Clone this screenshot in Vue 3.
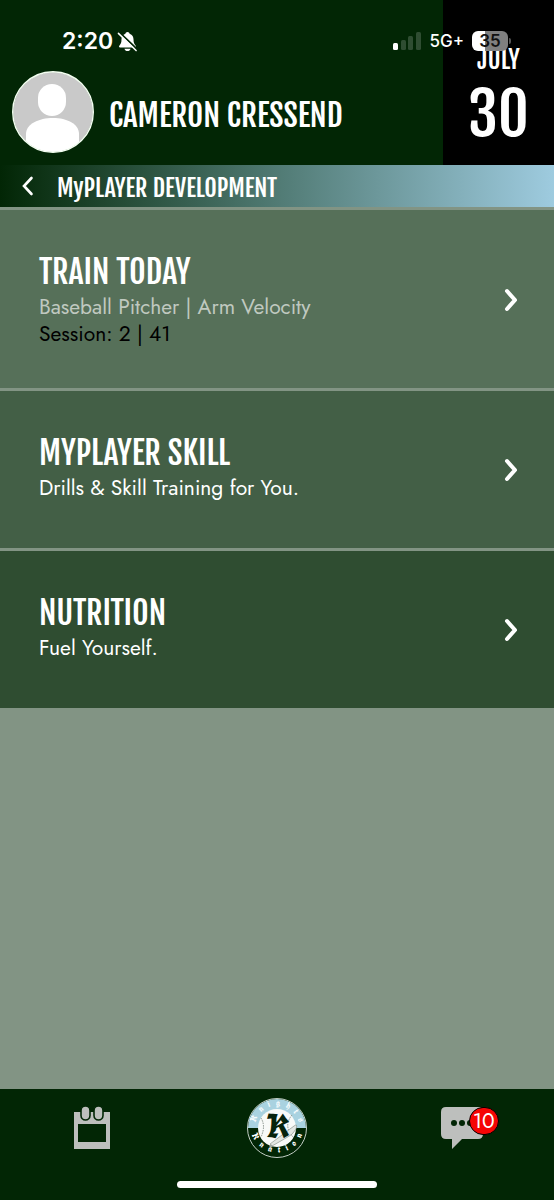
<template>
  <div class="app">
    <div class="status-bar">
      <div class="status-left">
        <span class="clock">2:20</span>
        <svg class="bell-icon" viewBox="0 0 22 22" aria-hidden="true">
          <path d="M11 1C9.8 1 9 1.8 8.8 2.8C5.8 3.7 4.7 6.2 4.7 9C4.7 12.8 3.8 13.8 2.4 15.4C1.8 16.2 2.2 17.2 3.2 17.2H18.8C19.8 17.2 20.2 16.2 19.6 15.4C18.2 13.8 17.3 12.8 17.3 9C17.3 6.2 16.2 3.7 13.2 2.8C13 1.8 12.2 1 11 1Z" fill="#fff"/>
          <path d="M7.8 18.5H14.2C13.8 20 12.6 21 11 21S8.2 20 7.8 18.5Z" fill="#fff"/>
          <path d="M2.6 1.6L21 19" stroke="#022605" stroke-width="2"/>
          <path d="M1.5 2.5L20 20.5" stroke="#fff" stroke-width="1.6" stroke-linecap="round"/>
        </svg>
      </div>
      <div class="status-right">
        <svg class="signal-icon" viewBox="0 0 28 18" aria-hidden="true">
          <rect x="0" y="11" width="5" height="7" rx="1.5" fill="#fff"/>
          <rect x="8" y="8" width="5" height="10" rx="1.5" fill="#2f4d32"/>
          <rect x="15" y="4" width="5" height="14" rx="1.5" fill="#2f4d32"/>
          <rect x="23" y="0" width="5" height="18" rx="1.5" fill="#2f4d32"/>
        </svg>
        <span class="network">5G+</span>
        <span class="battery">35</span>
      </div>
    </div>

    <header class="header">
      <div class="profile">
        <svg class="avatar" viewBox="0 0 82 82" aria-hidden="true">
          <defs>
            <clipPath id="avatar-clip"><circle cx="41" cy="41" r="40"/></clipPath>
          </defs>
          <circle cx="41" cy="41" r="40" fill="#c9c9c9"/>
          <g clip-path="url(#avatar-clip)" fill="#fff">
            <rect x="26" y="13" width="28" height="32" rx="14"/>
            <path d="M14 82V63C14 53 27 47 41 47S67 53 67 63V82Z"/>
          </g>
          <circle cx="41" cy="41" r="40.3" fill="none" stroke="#f4fff2" stroke-width="1.4"/>
        </svg>
        <h1 class="name">CAMERON CRESSEND</h1>
      </div>
      <div class="date">
        <span class="month">JULY</span>
        <span class="day">30</span>
      </div>
    </header>

    <nav class="title-bar">
      <button class="back" type="button" aria-label="Back">
        <svg width="12" height="20" viewBox="0 0 12 20" fill="none">
          <path d="M9.5 2L2 10L9.5 18" stroke="#fff" stroke-width="2.6" stroke-linecap="round"/>
        </svg>
      </button>
      <h2 class="page-title">MyPLAYER DEVELOPMENT</h2>
    </nav>

    <main class="content">
      <button v-for="card in cards" :key="card.id" class="card" :class="card.id" type="button">
        <span class="card-body">
          <span class="card-title">{{ card.title }}</span>
          <span class="card-text">{{ card.text }}</span>
          <span v-if="card.session" class="card-text session">{{ card.session }}</span>
        </span>
        <svg class="chevron" width="16" height="26" viewBox="0 0 16 26" fill="none" aria-hidden="true">
          <path d="M4 4L12 13L4 22" stroke="#fff" stroke-width="4" stroke-linecap="round" stroke-linejoin="round"/>
        </svg>
      </button>
    </main>

    <footer class="footer">
      <div class="tabs">
        <button class="tab" type="button" aria-label="Calendar">
          <svg width="36" height="44" viewBox="0 0 36 44">
            <path d="M0 6H36V43H0Z" fill="#bdbfbd"/>
            <path d="M4 18H32V36H4Z" fill="#022605"/>
            <rect x="7" y="0" width="9" height="14" rx="4.5" fill="#bdbfbd" stroke="#022605" stroke-width="1.6"/>
            <rect x="20" y="0" width="9" height="14" rx="4.5" fill="#bdbfbd" stroke="#022605" stroke-width="1.6"/>
          </svg>
        </button>
        <button class="tab" type="button" aria-label="Knights Knation">
          <svg width="62" height="62" viewBox="0 0 62 62">
            <defs>
              <path id="arc-top" d="M9 31A22 22 0 0 1 53 31"/>
              <path id="arc-bottom" d="M4 29A27 27 0 0 0 58 29"/>
            </defs>
            <circle cx="31" cy="31" r="29.5" fill="#022605"/>
            <path d="M2 31A29 29 0 0 1 60 31Z" fill="#a9d2e0"/>
            <circle cx="31" cy="31" r="29.5" fill="none" stroke="#c3cec6" stroke-width="1"/>
            <circle cx="31" cy="31" r="19" fill="#f8faf8"/>
            <path d="M15 21Q20 29 15 40M46 18Q37 29 47 40" fill="none" stroke="#87918a" stroke-width="1" stroke-dasharray="1.5 1"/>
            <path d="M24 47L48 29Q52 26 50 32Q47 38 40 41L26 49Z" fill="#e2e6e2" stroke="#7d867f" stroke-width="0.6"/>
            <circle cx="25" cy="49" r="1.6" fill="#9ea69f"/>
            <text class="arc-text light" text-anchor="middle"><textPath href="#arc-top" startOffset="50%">K&#160;&#160; n&#160;&#160; i&#160;&#160; g&#160;&#160; h&#160;&#160; t&#160;&#160; s</textPath></text>
            <text class="arc-text" text-anchor="middle"><textPath href="#arc-bottom" startOffset="50%">K&#160;&#160;&#160; n&#160;&#160;&#160; a&#160;&#160;&#160; t&#160;&#160;&#160; i&#160;&#160;&#160; o&#160;&#160;&#160; n</textPath></text>
            <text class="monogram" x="32" y="42" text-anchor="middle">K</text>
          </svg>
        </button>
        <button class="tab" type="button" aria-label="Messages">
          <span class="message">
            <svg width="42" height="43" viewBox="0 0 42 43">
              <path d="M5 0H37Q42 0 42 5V27Q42 32 37 32H21L11 42V32H5Q0 32 0 27V5Q0 0 5 0Z" fill="#bdbfbd"/>
              <circle cx="13" cy="16" r="3" fill="#022605"/>
              <circle cx="21" cy="16" r="3" fill="#022605"/>
              <circle cx="29" cy="16" r="3" fill="#022605"/>
            </svg>
            <span class="badge">10</span>
          </span>
        </button>
      </div>
      <div class="home-indicator"></div>
    </footer>
  </div>
</template>

<script setup>
const cards = [
  {
    id: 'train',
    title: 'TRAIN TODAY',
    text: 'Baseball Pitcher | Arm Velocity',
    session: 'Session: 2 | 41'
  },
  { id: 'skill', title: 'MYPLAYER SKILL', text: 'Drills & Skill Training for You.' },
  { id: 'nutrition', title: 'NUTRITION', text: 'Fuel Yourself.' }
]
</script>

<style>
body {
  margin: 0;
  background: #829484;
}
</style>

<style scoped>
.app {
  position: relative;
  display: flex;
  flex-direction: column;
  min-height: 100vh;
  background: #829484;
  color: #fff;
  font-family: Futura, Jost, "Josefin Sans", Lato, "Liberation Sans", sans-serif;
}

button {
  margin: 0;
  padding: 0;
  border: 0;
  background: none;
  color: inherit;
  font: inherit;
  cursor: pointer;
}

h1,
h2 {
  margin: 0;
}

svg {
  display: block;
  flex-shrink: 0;
}

.name,
.date,
.page-title,
.card-title {
  font-family: "Fjalla One", "Roboto Condensed", "Liberation Sans Narrow", "Open Sans Condensed", sans-serif;
  font-weight: 400;
}

/* system status, drawn over the header */
.status-bar {
  position: absolute;
  top: 28px;
  left: 0;
  right: 0;
  z-index: 1;
  display: flex;
  align-items: center;
  justify-content: space-between;
  height: 26px;
  padding: 0 46px 0 62px;
  font-family: Inter, sans-serif;
}

.status-left,
.status-right {
  display: flex;
  align-items: center;
}

.status-left {
  gap: 4px;
}

.status-right {
  gap: 8px;
}

.clock {
  font-size: 23px;
  font-weight: 600;
}

.bell-icon {
  width: 21px;
  height: 21px;
}

.signal-icon {
  width: 28px;
  height: 18px;
}

.network {
  font-size: 17px;
  font-weight: 500;
}

.battery {
  position: relative;
  width: 36px;
  height: 20px;
  border-radius: 6px;
  background: linear-gradient(90deg, #fff 35%, #808080 35%);
  color: #111;
  font-size: 17px;
  font-weight: 600;
  line-height: 20px;
  text-align: center;
}

.battery::after {
  content: "";
  position: absolute;
  top: 7px;
  right: -3px;
  width: 2px;
  height: 6px;
  border-radius: 0 2px 2px 0;
  background: #555;
}

.header {
  display: flex;
  background: #022605;
}

.profile {
  display: flex;
  flex: 1;
  align-items: center;
  gap: 15px;
  padding: 71px 0 12px 12px;
}

.avatar {
  width: 82px;
  height: 82px;
}

.name {
  padding-top: 8px;
  font-size: 31px;
  line-height: 36px;
  white-space: nowrap;
}

.date {
  display: flex;
  flex-direction: column;
  align-items: center;
  width: 20%;
  padding-top: 44px;
  box-sizing: border-box;
  background: #000;
}

.month {
  font-size: 25px;
  line-height: 32px;
}

.day {
  font-size: 60px;
  line-height: 76px;
}

.title-bar {
  display: flex;
  align-items: center;
  gap: 23px;
  height: 42px;
  padding-left: 22px;
  background: linear-gradient(90deg, #022605 0%, #527c76 51%, #9ecbdf 100%);
}

.page-title {
  padding-top: 4px;
  font-size: 24px;
  line-height: 32px;
}

.content {
  display: flex;
  flex: 1;
  flex-direction: column;
  gap: 3px;
  padding-top: 3px;
}

.card {
  display: flex;
  align-items: center;
  justify-content: space-between;
  padding: 41px 35px 40px 39px;
  text-align: left;
}

.train {
  background: #567059;
}

.skill {
  background: #435f46;
}

.nutrition {
  background: #2f4d31;
}

.card-body {
  display: flex;
  flex-direction: column;
}

.card-title {
  font-size: 32px;
  line-height: 43px;
}

.card-text {
  font-size: 21px;
  line-height: 27px;
  padding-bottom: 6px;
}

.train .card-text {
  padding-bottom: 0;
  color: #c0c9c0;
}

.train .session {
  color: #000;
}

.footer {
  background: #022605;
}

.tabs {
  display: grid;
  grid-template-columns: repeat(3, 1fr);
  align-items: center;
  padding: 8px 0;
}

.tab {
  display: flex;
  justify-content: center;
}

.arc-text,
.monogram {
  font-family: "Old English Text MT", UnifrakturCook, UnifrakturMaguntia, "Pirata One", "Grenze Gotisch", "Liberation Serif", serif;
  font-weight: 700;
}

.arc-text {
  fill: #fff;
  font-size: 9px;
}

.arc-text.light {
  fill: #f5fbfd;
}

.monogram {
  fill: #06230d;
  font-size: 33px;
}

.message {
  position: relative;
}

.badge {
  position: absolute;
  top: 0;
  left: 28px;
  width: 28px;
  height: 26px;
  border: 1px solid #000;
  border-radius: 14px;
  background: #f50505;
  font-size: 21px;
  line-height: 26px;
  text-align: center;
}

.home-indicator {
  width: 36%;
  height: 7px;
  margin: 14px auto 12px;
  border-radius: 4px;
  background: #fff;
}
</style>
